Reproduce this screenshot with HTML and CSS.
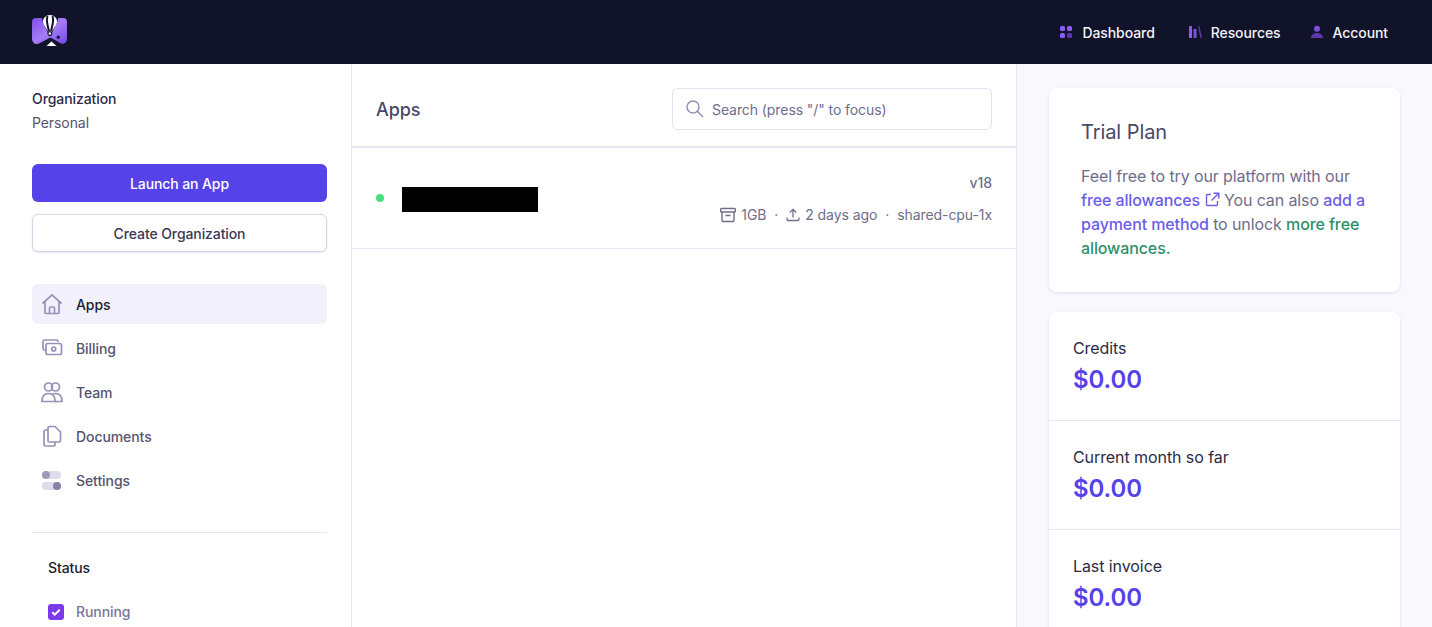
FILE: index.html
```html
<!DOCTYPE html>
<html lang="en">
<head>
  <meta charset="UTF-8">
  <meta name="viewport" content="width=device-width, initial-scale=1.0">
  <title>Apps</title>
  <link rel="stylesheet" href="styles.css">
</head>
<body>
  <header class="topbar">
    <svg class="logo" width="36" height="32" viewBox="0 0 36 32">
      <defs>
        <linearGradient id="logoFill" x1="0" y1="0" x2="1" y2="1">
          <stop offset="0" stop-color="#7c4ff0"/>
          <stop offset="0.5" stop-color="#a77cf5"/>
          <stop offset="1" stop-color="#7047e6"/>
        </linearGradient>
      </defs>
      <path d="M4 3H10C10 8 14 12 15.500 17L17 21H19L20.500 17C22 12 26 8 26 3H31A4 4 0 0 1 35 7V24A5 5 0 0 1 30 29L18.500 22.500L6 29A5 5 0 0 1 0 24V7A4 4 0 0 1 4 3Z" fill="url(#logoFill)"/>
      <path d="M18 0c-4 0-7 3-7 6.500 0 3.500 3.500 6.500 5.500 10.500h3c2-4 5.500-7 5.500-10.500C25 3 22 0 18 0z" fill="#fff"/>
      <path d="M15.500 1c-1.500 4 0 10 1.500 15M20.500 1c1.500 4 0 10-1.500 15" stroke="#11132a" stroke-width="2" fill="none"/>
      <circle cx="17.800" cy="18.500" r="2.400" fill="#11132a"/>
      <circle cx="17.800" cy="18.500" r="1.200" fill="#fff"/>
      <circle cx="26.300" cy="22.300" r="1.700" fill="#1b1440"/>
      <path d="M19.500 26.500L14.500 31h10z" fill="#fff"/>
    </svg>
    <nav class="topnav">
      <a class="topnav-item">
        <svg width="14" height="14" viewBox="0 0 14 14">
          <rect x="1" y="1" width="5" height="5" rx="1.500" fill="#8b5cf6"/>
          <rect x="8" y="1" width="5" height="5" rx="1.500" fill="#8b5cf6"/>
          <rect x="1" y="8" width="5" height="5" rx="1.500" fill="#8b5cf6"/>
          <rect x="8" y="8" width="5" height="5" rx="1.500" fill="#5b3aa8"/>
        </svg>
        Dashboard
      </a>
      <a class="topnav-item">
        <svg width="14" height="14" viewBox="0 0 14 14">
          <rect x="1" y="1" width="3" height="12" rx="0.500" fill="#8b5cf6"/>
          <rect x="5.500" y="4" width="3" height="9" rx="0.500" fill="#7c4fe0"/>
          <path d="M10 1.500l1.300-.4 2.700 11.500-1.500.4z" fill="#5b3aa8"/>
        </svg>
        Resources
      </a>
      <a class="topnav-item">
        <svg width="14" height="14" viewBox="0 0 14 14">
          <circle cx="7" cy="3.800" r="3" fill="#7c4fe0"/>
          <path d="M1 13c0-3 2.500-5 6-5s6 2 6 5z" fill="#5b3aa8"/>
        </svg>
        Account
      </a>
    </nav>
  </header>

  <div class="layout">
    <aside class="sidebar">
      <div class="org">
        <div class="org-label">Organization</div>
        <div class="org-name">Personal</div>
      </div>
      <button class="btn btn-primary">Launch an App</button>
      <button class="btn btn-outline">Create Organization</button>

      <ul class="side-menu">
        <li class="side-item active">
          <svg width="22" height="22" viewBox="0 0 22 22" fill="none" stroke="#9492b8" stroke-width="1.700" stroke-linejoin="round">
            <path d="M1.500 10.500L11 1.800l9.500 8.700"/>
            <path d="M4 8.500v11a1 1 0 0 0 1 1h12a1 1 0 0 0 1-1v-11"/>
            <path d="M8.500 20.500v-5.500a1 1 0 0 1 1-1h3a1 1 0 0 1 1 1v5.500"/>
          </svg>
          Apps
        </li>
        <li class="side-item">
          <svg width="22" height="22" viewBox="0 0 22 22" fill="none" stroke="#9492b8" stroke-width="1.700">
            <path d="M17 5V4.500A1.500 1.500 0 0 0 15.500 3h-12A1.500 1.500 0 0 0 2 4.500v7A1.500 1.500 0 0 0 3.500 13H5"/>
            <rect x="5" y="6.500" width="15.500" height="11" rx="1.800"/>
            <circle cx="12.700" cy="12" r="2"/>
          </svg>
          Billing
        </li>
        <li class="side-item">
          <svg width="22" height="22" viewBox="0 0 22 22" fill="none" stroke="#9492b8" stroke-width="1.700">
            <circle cx="7.500" cy="6" r="4"/>
            <circle cx="14.500" cy="6" r="4"/>
            <path d="M1 20.500c0-5 2.500-8 6.500-8s6.500 3 6.500 8z"/>
            <path d="M11.500 13c1-.4 2-.5 3-.5 4 0 6.500 3 6.500 8h-7"/>
          </svg>
          Team
        </li>
        <li class="side-item">
          <svg width="22" height="22" viewBox="0 0 22 22" fill="none" stroke="#9492b8" stroke-width="1.700" stroke-linejoin="round">
            <path d="M7 5H4.500A1.500 1.500 0 0 0 3 6.500v13A1.500 1.500 0 0 0 4.500 21h8a1.500 1.500 0 0 0 1.500-1.500V17"/>
            <path d="M7 3a1.500 1.500 0 0 1 1.500-1.500h5.500L19.500 7v8.500A1.500 1.500 0 0 1 18 17H8.500A1.500 1.500 0 0 1 7 15.500z"/>
          </svg>
          Documents
        </li>
        <li class="side-item">
          <svg width="22" height="22" viewBox="0 0 22 22">
            <rect x="1" y="2" width="19" height="8" rx="4" fill="#dddcea"/>
            <circle cx="5" cy="6" r="4" fill="#9c9bbd"/>
            <rect x="1" y="13" width="19" height="8" rx="4" fill="#dddcea"/>
            <circle cx="16" cy="17" r="4" fill="#8583aa"/>
          </svg>
          Settings
        </li>
      </ul>

      <hr class="side-rule">

      <div class="filters">
        <div class="filters-title">Status</div>
        <label class="check">
          <svg width="16" height="16" viewBox="0 0 16 16">
            <rect width="16" height="16" rx="3" fill="#7c3aed"/>
            <path d="M4.300 8.300l2.500 2.400 4.900-5" fill="none" stroke="#fff" stroke-width="2"/>
          </svg>
          Running
        </label>
      </div>
    </aside>

    <main class="apps">
      <div class="apps-head">
        <h1>Apps</h1>
        <div class="search">
          <svg width="20" height="20" viewBox="0 0 20 20" fill="none" stroke="#9492b8" stroke-width="1.500" stroke-linecap="round">
            <circle cx="8" cy="8" r="6"/>
            <path d="M12.500 12.500l5 5"/>
          </svg>
          <span>Search (press "/" to focus)</span>
        </div>
      </div>
      <div class="app-row">
        <span class="dot"></span>
        <span class="redacted"></span>
        <div class="app-meta">
          <div class="app-version">v18</div>
          <div class="app-stats">
            <svg width="16" height="16" viewBox="0 0 16 16" fill="none" stroke="#6f6d8c" stroke-width="1.400">
              <rect x="0.700" y="1.500" width="14.600" height="3.500" rx="0.800"/>
              <path d="M2 5v8.500a1 1 0 0 0 1 1h10a1 1 0 0 0 1-1V5M5.500 8.500h5"/>
            </svg>
            <span>1GB</span>
            <span class="sep">·</span>
            <svg width="14" height="14" viewBox="0 0 14 14" fill="none" stroke="#6f6d8c" stroke-width="1.300">
              <path d="M1 9.500v2a1 1 0 0 0 1 1h10a1 1 0 0 0 1-1v-2M7 9.500V1.500M3.800 4.500L7 1.300l3.200 3.200"/>
            </svg>
            <span>2 days ago</span>
            <span class="sep">·</span>
            <span>shared-cpu-1x</span>
          </div>
        </div>
      </div>
    </main>

    <aside class="rail">
      <section class="card trial">
        <h2>Trial Plan</h2>
        <p>Feel free to try our platform with our <a class="link">free allowances</a> <svg class="ext" width="15" height="15" viewBox="0 0 15 15" fill="none" stroke="#6c5ce7" stroke-width="1.400"><path d="M6 2.500H2.500a1 1 0 0 0-1 1v9a1 1 0 0 0 1 1h9a1 1 0 0 0 1-1V9M8.500 1.200h5.300v5.300M13.500 1.500L6.500 8.500"/></svg> You can also <a class="link">add a payment method</a> to unlock <a class="link-green">more free allowances.</a></p>
      </section>
      <section class="card amounts">
        <div class="amount">
          <div class="amount-label">Credits</div>
          <div class="amount-value">$0.00</div>
        </div>
        <div class="amount">
          <div class="amount-label">Current month so far</div>
          <div class="amount-value">$0.00</div>
        </div>
        <div class="amount">
          <div class="amount-label">Last invoice</div>
          <div class="amount-value">$0.00</div>
        </div>
      </section>
    </aside>
  </div>
</body>
</html>
```

FILE: styles.css
```css
* {
  box-sizing: border-box;
}
html, body {
  height: 100%;
}
body {
  margin: 0;
  font-family: Inter, "Liberation Sans", sans-serif;
  font-size: 14px;
  letter-spacing: -0.08px;
  color: #4a4868;
  background: #fff;
  overflow: hidden;
}
.topbar {
  height: 64px;
  background: #11132a;
  display: flex;
  align-items: center;
  justify-content: space-between;
  padding: 0 44px 0 32px;
}
.logo {
  display: block;
  margin-top: -2px;
}
.topnav {
  display: flex;
  gap: 29px;
}
.topnav-item {
  display: flex;
  align-items: center;
  gap: 9px;
  color: #f3f2fa;
  font-weight: 500;
}
.topnav-item:first-child {
  margin-right: 4px;
}
.layout {
  display: flex;
  height: 563px;
  overflow: hidden;
}
.sidebar {
  width: 352px;
  flex: none;
  padding: 23px 24px 0 32px;
  border-right: 1px solid #e6e5f2;
}
.org {
  line-height: 24px;
  margin-bottom: 29px;
}
.org-label {
  color: #2c2a45;
  font-weight: 500;
}
.org-name {
  color: #55536f;
}
.btn {
  display: block;
  width: 100%;
  font: 500 14px Inter, "Liberation Sans", sans-serif;
  letter-spacing: -0.1px;
  border-radius: 6px;
}
.btn-primary {
  height: 38px;
  background: #5542e8;
  color: #fff;
  border: 0;
  margin-bottom: 12px;
}
.btn-outline {
  height: 38px;
  background: #fff;
  color: #3a3855;
  border: 1px solid #d5d4e4;
  box-shadow: 0 1px 2px rgba(30, 30, 70, 0.1);
}
.side-menu {
  list-style: none;
  margin: 32px 0 0;
  padding: 0;
  display: flex;
  flex-direction: column;
  gap: 4px;
}
.side-item {
  height: 40px;
  display: flex;
  align-items: center;
  gap: 13px;
  padding-left: 9px;
  border-radius: 6px;
  color: #55536f;
  font-weight: 500;
}
.side-item.active {
  background: #f2f1fb;
  color: #1c1b30;
}
.side-rule {
  border: 0;
  border-top: 1px solid #e6e5f2;
  margin: 32px 0 0;
}
.filters {
  padding: 25px 16px 0;
}
.filters-title {
  color: #1c1b30;
  font-weight: 500;
  line-height: 20px;
  margin-bottom: 25px;
}
.check {
  display: flex;
  align-items: center;
  gap: 12px;
  color: #77759a;
  font-weight: 500;
}
.apps {
  width: 665px;
  flex: none;
  border-right: 1px solid #e6e5f2;
}
.apps-head {
  height: 84px;
  display: flex;
  align-items: center;
  justify-content: space-between;
  padding: 8px 24px 0;
  border-bottom: 2px solid #e6e5f2;
}
.apps-head h1 {
  margin: 0;
  font-size: 18px;
  font-weight: 500;
  color: #4a4868;
}
.search {
  width: 320px;
  height: 42px;
  display: flex;
  align-items: center;
  gap: 7px;
  padding-left: 12px;
  border: 1px solid #e3e2f0;
  border-radius: 6px;
  color: #6f6d8c;
}
.app-row {
  height: 101px;
  display: flex;
  align-items: center;
  padding: 0 24px;
  border-bottom: 1px solid #e6e5f2;
}
.dot {
  width: 8px;
  height: 8px;
  border-radius: 50%;
  background: #4ade80;
  margin-right: 18px;
}
.redacted {
  width: 136px;
  height: 25px;
  background: #000;
  margin-top: 2px;
}
.app-meta {
  margin-left: auto;
  text-align: right;
  color: #6f6d8c;
  padding-top: 2px;
}
.app-version {
  line-height: 20px;
  margin-bottom: 12px;
  font-weight: 500;
}
.app-stats {
  display: flex;
  align-items: center;
  gap: 5px;
  line-height: 20px;
}
.sep {
  margin: 0 3px;
}
.rail {
  flex: 1;
  background: #f8f8fd;
  padding: 24px 32px;
  display: flex;
  flex-direction: column;
  gap: 20px;
}
.card {
  background: #fff;
  border-radius: 8px;
  box-shadow: 0 1px 3px rgba(40, 40, 90, 0.12);
}
.trial {
  padding: 32px;
  height: 204px;
  flex: none;
}
.trial h2 {
  margin: 0 0 20px;
  font-size: 20px;
  line-height: 24px;
  font-weight: 400;
  color: #4a4868;
}
.trial p {
  margin: 0;
  font-size: 16px;
  line-height: 24px;
  letter-spacing: -0.11px;
  color: #6f6d8c;
}
.link {
  color: #6c5ce7;
  font-weight: 500;
}
.link-green {
  color: #2f8f6b;
  font-weight: 500;
}
.ext {
  vertical-align: -1px;
}
.amounts {
  flex: none;
}
.amount {
  height: 109px;
  padding: 24px 24px 0;
  border-bottom: 1px solid #e6e5f2;
}
.amount-label {
  font-size: 16px;
  line-height: 24px;
  color: #2c2a45;
}
.amount-value {
  margin-top: 4px;
  font-size: 24px;
  line-height: 32px;
  font-weight: 600;
  color: #5542e8;
}
```
